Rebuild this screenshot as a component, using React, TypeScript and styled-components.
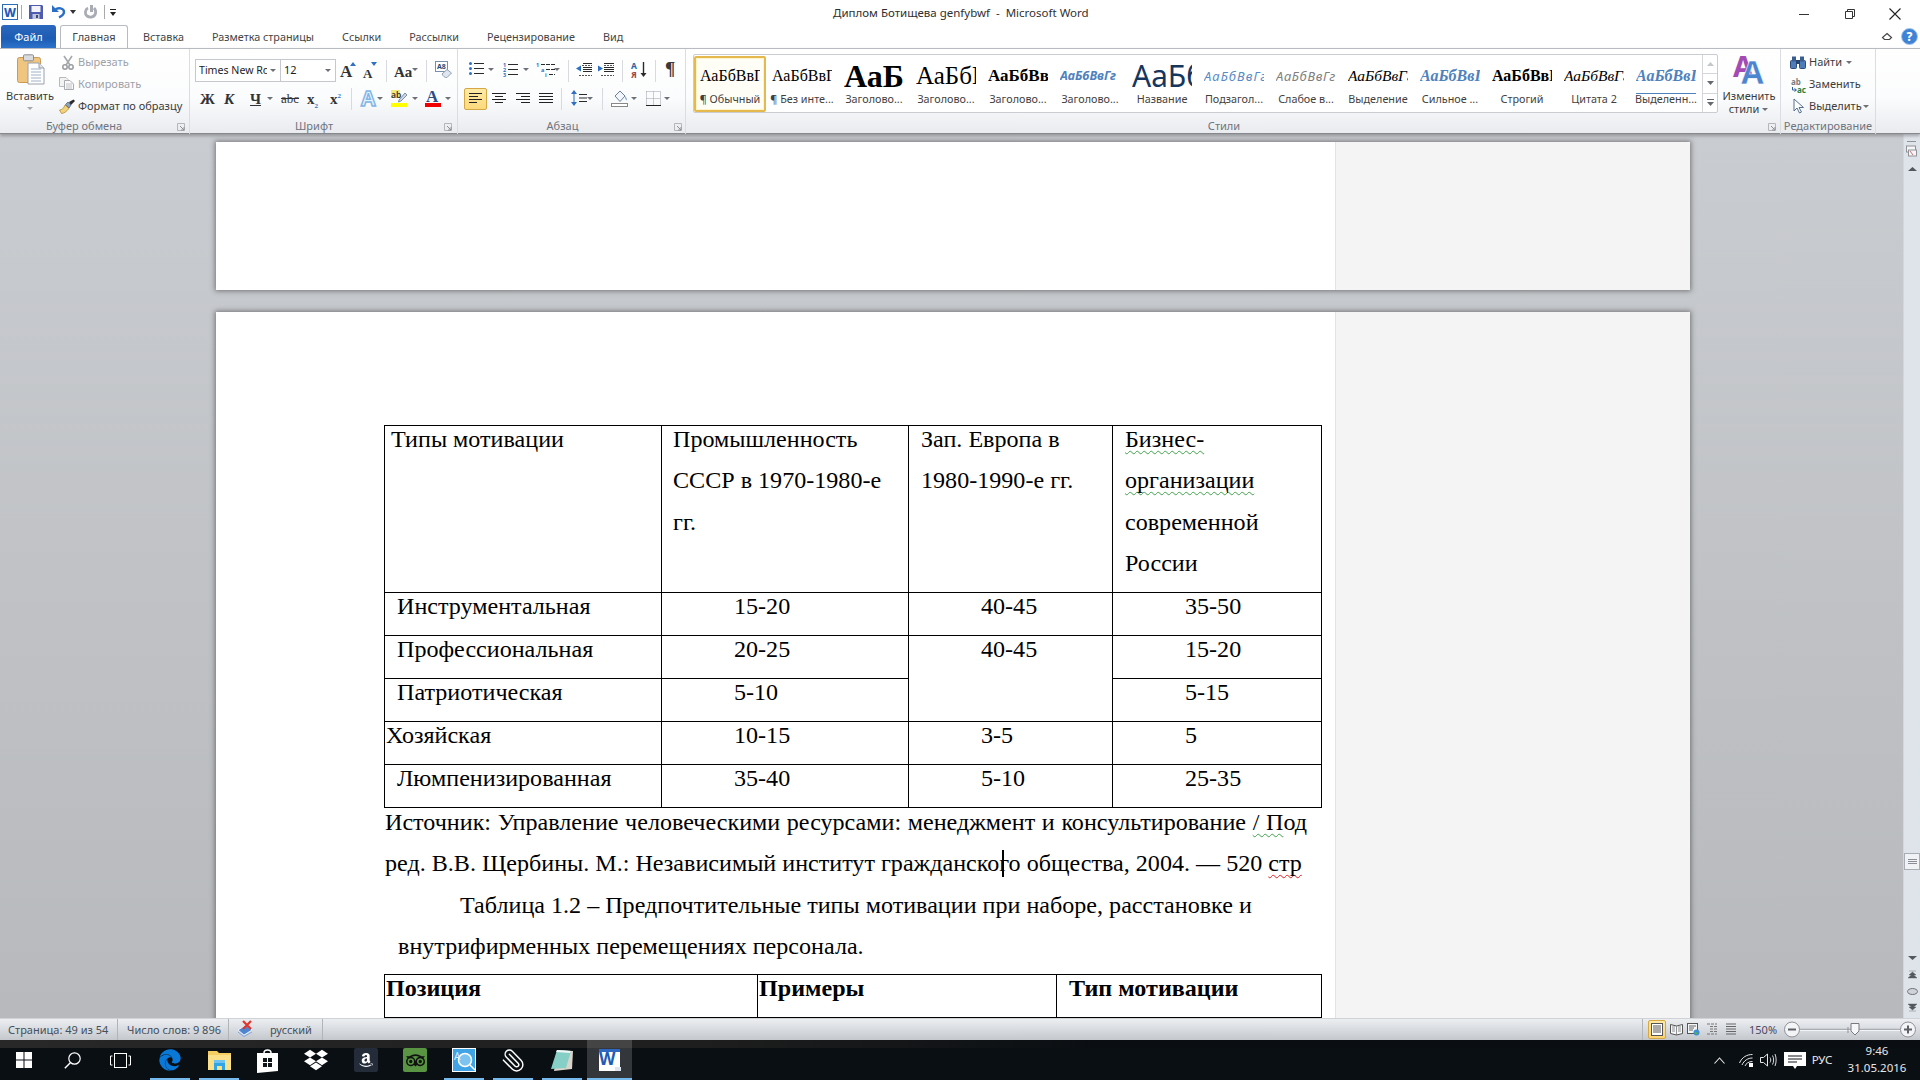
import React from 'react';
import styled, { createGlobalStyle } from 'styled-components';
import { FaEdge, FaDropbox, FaAmazon, FaTripadvisor } from 'react-icons/fa';
import { Paperclip } from 'lucide-react';

const Global = createGlobalStyle`
  html, body { margin: 0; padding: 0; width: 1920px; height: 1080px; overflow: hidden; background: #c8cbcf; }
  #root { width: 1920px; height: 1080px; }
`;

const UI = `"Noto Sans", "Open Sans", sans-serif`;
const SERIF = `"Liberation Serif", "Times New Roman", serif`;

const Frame = styled.div`
  position: relative; width: 1920px; height: 1080px; overflow: hidden;
  display: flex; flex-direction: column; font-family: ${UI}; font-size: 11px; color: #3b3b3b;
`;
const Glyph = styled.svg<{ $x: number; $y: number }>`
  position: absolute; left: ${p => p.$x}px; top: ${p => p.$y}px; overflow: visible;
`;

/* ---------- title bar ---------- */
const TitleArea = styled.header`
  flex: 0 0 48px; height: 48px; background: #fff; box-sizing: border-box; padding-top: 25px;
`;
const WindowTitle = styled.div`
  position: absolute; left: 833px; top: 5px; font-size: 11.5px; line-height: 16px; color: #2f2f2f; white-space: pre;
`;
const TabRow = styled.nav`
  display: flex; align-items: stretch; height: 23px; padding-left: 1px; position: relative; z-index: 2;
`;
const FileTab = styled.div`
  width: 55px; height: 23px; box-sizing: border-box; border-radius: 3px 3px 0 0; color: #fff; text-align: center;
  line-height: 23px; background: linear-gradient(#2c68bd, #1c5cb4 60%, #2d74cc); font-size: 11px;
`;
const ActiveTab = styled.div`
  margin-left: 4px; margin-right: 15px; width: 68px; height: 24px; box-sizing: border-box; text-align: center; line-height: 22px;
  background: #fff; border: 1px solid #b8bcc2; border-bottom: 0; border-radius: 3px 3px 0 0; color: #444;
`;
const Tab = styled.div`
  margin-right: 28px; line-height: 23px; white-space: nowrap; color: #444; font-size: 10.8px;
`;

/* ---------- ribbon ---------- */
const Ribbon = styled.section`
  flex: 0 0 86px; height: 86px; box-sizing: border-box; display: flex; z-index: 3;
  background: linear-gradient(#fff 0, #fbfcfd 48px, #e9ebef 84px);
  border-top: 1px solid #b8bcc2; border-bottom: 1px solid #85888d; box-shadow: 0 2px 3px rgba(90, 90, 95, .45);
`;
const Group = styled.div<{ $w: number }>`
  flex: 0 0 ${p => p.$w}px; box-sizing: border-box; border-right: 1px solid #dadde2;
  display: flex; align-items: flex-end; justify-content: center; height: 85px;
  &:last-child { border-right: 0; }
`;
const GroupLabel = styled.span<{ $pad?: number }>`
  line-height: 15px; margin-bottom: 1px; color: #6e7480; padding-right: ${p => p.$pad ?? 0}px; white-space: nowrap;
`;
const Label = styled.span<{ $x: number; $y: number; $muted?: boolean; $center?: boolean }>`
  position: absolute; left: ${p => p.$x}px; top: ${p => p.$y - 8}px; line-height: 16px; white-space: nowrap;
  color: ${p => (p.$muted ? '#9ea2a9' : '#3c3c3c')};
  ${p => (p.$center ? 'transform: translateX(-50%);' : '')}
`;
const Caret = styled.i<{ $x: number; $y: number; $light?: boolean }>`
  position: absolute; left: ${p => p.$x - 3}px; top: ${p => p.$y - 1}px; width: 0; height: 0;
  border-left: 3px solid transparent; border-right: 3px solid transparent; border-top: 3px solid ${p => (p.$light ? '#a5a8ad' : '#6d7076')};
`;
const ToolRule = styled.i<{ $x: number; $y: number }>`
  position: absolute; left: ${p => p.$x}px; top: ${p => p.$y}px; width: 1px; height: 22px; background: #d8dadf;
`;
const ComboBox = styled.div<{ $x: number; $w: number }>`
  position: absolute; left: ${p => p.$x}px; top: 59px; width: ${p => p.$w}px; height: 23px; box-sizing: border-box;
  border: 1px solid #c5c8ce; background: #fff; font-size: 11px; line-height: 20px; padding-left: 3px; color: #1e1e1e; overflow: hidden; white-space: nowrap;
`;
const ComboText = styled.span`
  display: block; width: 68px; overflow: hidden; font-family: ${UI}; font-size: 10.6px;
`;
const FormatLetter = styled.span<{ $x: number; $top?: number; $tint?: string; $light?: boolean; $italic?: boolean; $under?: boolean; $strike?: boolean; $size?: number }>`
  position: absolute; left: ${p => p.$x}px; top: ${p => p.$top ?? 90}px; line-height: 18px; font-family: ${SERIF};
  font-weight: ${p => (p.$light ? 400 : 700)};
  font-size: ${p => p.$size ?? 15}px; color: ${p => p.$tint ?? '#333'}; font-style: ${p => (p.$italic ? 'italic' : 'normal')};
  text-decoration: ${p => (p.$under ? 'underline' : p.$strike ? 'line-through' : 'none')};
  sub, sup { color: #2f6fc4; font-size: 7px; line-height: 0; }
`;
const HotButton = styled.div`
  position: absolute; left: 464px; top: 88px; width: 23px; height: 22px; box-sizing: border-box; border: 1px solid #d5a745;
  border-radius: 2px; background: linear-gradient(#fdeaa6, #fcd97c);
`;

/* style gallery */
const Gallery = styled.div`
  position: absolute; left: 693px; top: 54px; width: 1025px; height: 59px; box-sizing: border-box;
  border: 1px solid #c9ccd1; border-radius: 2px; background: #fff; display: flex; padding-top: 1px;
`;
const StyleCard = styled.div<{ $on?: boolean }>`
  flex: 0 0 72px; height: 56px; box-sizing: border-box; display: flex; flex-direction: column; align-items: center;
  ${p => (p.$on ? 'border: 2px solid #e6b94e; border-radius: 2px; background: #fffef6; box-shadow: inset 0 0 0 1px #fff3c8;' : 'border: 2px solid transparent;')}
`;
const StyleSample = styled.div<{ $font?: string; $size: number; $bold?: boolean; $italic?: boolean; $color?: string; $line?: boolean; $track?: number }>`
  width: 60px; height: 36px; overflow: hidden; white-space: nowrap; text-align: left; line-height: 36px;
  font-family: ${p => p.$font ?? SERIF}; font-size: ${p => p.$size}px; font-weight: ${p => (p.$bold ? 700 : 400)};
  font-style: ${p => (p.$italic ? 'italic' : 'normal')}; color: ${p => p.$color ?? '#000'}; letter-spacing: ${p => p.$track ?? 0}px;
  ${p => (p.$line ? 'box-shadow: inset 0 -7px 0 -6px #4f81bd;' : '')}
`;
const StyleName = styled.div`
  line-height: 14px; margin-top: -2px; white-space: nowrap; color: #3f3f3f; font-size: 10.8px;
`;
const GalleryArrows = styled.div`
  margin-left: auto; margin-top: -1px; width: 15px; height: 57px; display: flex; flex-direction: column; border-left: 1px solid #d3d6da;
`;
const ArrowCell = styled.div`
  flex: 1; display: flex; align-items: center; justify-content: center; border-bottom: 1px solid #d3d6da;
  &:last-child { border-bottom: 0; }
`;

/* ---------- document ---------- */
const DocArea = styled.main`
  flex: 0 0 884px; height: 884px; position: relative; overflow: hidden; background: linear-gradient(#c9ccd0, #b7b9bc); z-index: 1;
`;
const Sheet = styled.article<{ $h: number; $gap: number }>`
  position: relative; box-sizing: border-box; width: 1474px; height: ${p => p.$h}px; margin: ${p => p.$gap}px 0 0 216px;
  background: #fff; box-shadow: 0 0 5px 1px rgba(70, 70, 72, .65); font-family: ${SERIF}; color: #000; font-size: 24.1px;
`;
const MarkupMargin = styled.div`
  position: absolute; left: 1119px; top: 0; right: 0; bottom: 0; background: #f4f4f4; border-left: 1px solid #e3e3e3;
`;
const SheetBody = styled.div`
  position: absolute; left: 168px; top: 113px; width: 937px;
`;
const Table = styled.table<{ $gap?: number }>`
  border-collapse: collapse; table-layout: fixed; width: 937px; position: relative; margin-top: ${p => p.$gap ?? 0}px;
`;
const Cell = styled.td<{ $h?: number }>`
  border: 1.2px solid #000; padding: 0; vertical-align: top; height: ${p => p.$h ?? 43}px; box-sizing: border-box; overflow: hidden;
`;
const CellText = styled.div<{ $in: number; $bold?: boolean }>`
  padding-left: ${p => p.$in}px; line-height: 26px; white-space: nowrap; font-weight: ${p => (p.$bold ? 700 : 400)};
`;
const HeadText = styled.div<{ $in: number }>`
  padding-left: ${p => p.$in}px; line-height: 41.4px; margin-top: -7px; white-space: nowrap;
`;
const Squiggle = styled.span<{ $c: string }>`
  text-decoration: underline wavy ${p => p.$c} 1px; text-underline-offset: 3px; text-decoration-skip-ink: none;
`;
const JustLine = styled.p<{ $w: number; $top?: number }>`
  margin: ${p => p.$top ?? 0}px 0 0 1px; width: ${p => p.$w}px; line-height: 41.4px; text-align: justify; text-align-last: justify; white-space: nowrap;
`;
const PlainLine = styled.p<{ $in: number }>`
  margin: 0 0 0 ${p => p.$in}px; line-height: 41.4px; white-space: nowrap;
`;
const TextCaret = styled.i`
  position: absolute; left: 786px; top: 538px; width: 1.5px; height: 27px; background: #000;
`;
const Scrollbar = styled.aside`
  position: absolute; right: 0; top: 0; width: 17px; bottom: 0; background: #dfe3ea; border-left: 1px solid #d3d6db; box-sizing: border-box; z-index: 2;
`;
const ScrollThumb = styled.div`
  position: absolute; left: 0; top: 719px; width: 16px; height: 17px; box-sizing: border-box; border: 1px solid #a9adb4; background: #f0f2f5;
  display: flex; align-items: center; justify-content: center;
`;

/* ---------- status bar ---------- */
const StatusBar = styled.footer`
  flex: 0 0 22px; height: 22px; position: relative; display: flex; z-index: 4; box-sizing: border-box;
  background: linear-gradient(#eceef1, #d8dbe0 50%, #c4c7cc); border-top: 1px solid #cfd2d6; color: #44505c; line-height: 21px; font-size: 11px;
`;
const StatusCell = styled.div<{ $w: number; $pad: number }>`
  width: ${p => p.$w}px; box-sizing: border-box; padding-left: ${p => p.$pad}px; border-right: 1px solid #b1b4b9; white-space: nowrap;
`;
const ViewActive = styled.div`
  position: absolute; left: 1648px; top: 1px; width: 18px; height: 19px; box-sizing: border-box; border: 1px solid #d5a745; border-radius: 2px;
  background: linear-gradient(#fdeaa6, #fcd372);
`;
const ZoomLabel = styled.span`
  position: absolute; left: 1749px; top: 0; color: #4a4a66;
`;
const StatusRule = styled.i`
  position: absolute; left: 1642px; top: 0; width: 1px; height: 21px; background: #b1b4b9;
`;

/* ---------- taskbar ---------- */
const Taskbar = styled.div`
  flex: 0 0 40px; height: 40px; position: relative; z-index: 4; color: #fff;
  background: linear-gradient(90deg, rgba(40, 40, 40, 1) 0, rgba(30, 30, 30, 1) 700px, rgba(10, 14, 18, 1) 1100px) top / 100% 8px no-repeat, #0a0f14;
`;
const TaskSlot = styled.div<{ $x: number; $w?: number; $on?: boolean; $run?: boolean }>`
  position: absolute; left: ${p => p.$x}px; top: 0; height: 40px; width: ${p => p.$w ?? 40}px; display: flex; align-items: center; justify-content: center;
  background: ${p => (p.$on ? 'rgba(255,255,255,.17)' : 'transparent')};
  ${p => (p.$run ? 'box-shadow: inset 0 -2px 0 #76b9ed;' : '')}
`;
const AppTile = styled.div<{ $bg: string }>`
  width: 24px; height: 24px; border-radius: 2px; background: ${p => p.$bg}; display: flex; align-items: center; justify-content: center;
`;
const MirroredClip = styled(Paperclip)`
  transform: scaleX(-1);
`;
const TrayText = styled.span<{ $x: number; $y: number; $size?: number }>`
  position: absolute; left: ${p => p.$x}px; top: ${p => p.$y}px; transform: translateX(-50%); line-height: 14px; color: #e8e8e8; font-size: ${p => p.$size ?? 11.5}px; white-space: nowrap;
`;

/* ---------- icons ---------- */
const Launcher = ({ x }: { x: number }) => (
  <Glyph $x={x} $y={123} width="8" height="8" viewBox="0 0 8 8">
    <path d="M0.5 0.5H7.5V7.5H0.5Z" fill="none" stroke="#b3b6bb" />
    <path d="M3 3L7 7M7 4V7H4" fill="none" stroke="#8d9096" />
  </Glyph>
);

const lines = (x1: number, x2: number, ys: number[], c = '#2a2a2a') =>
  ys.map(y => <path key={y} d={`M${x1} ${y}H${x2}`} stroke={c} strokeWidth="1" />);

const RibbonIcons = () => (
  <>
    {/* paste */}
    <Glyph $x={17} $y={54} width="27" height="31" viewBox="0 0 27 31">
      <rect x="0.5" y="3.5" width="23" height="25" rx="2" fill="#f0c57f" stroke="#c89a55" />
      <rect x="6.5" y="0.8" width="10" height="6" rx="1" fill="#d9dbe0" stroke="#8e8f90" />
      <path d="M11 9H22L27 14V30H11Z" fill="#fff" stroke="#9aa0a8" />
      <path d="M22 9V14H27" fill="#dfe4ec" stroke="#9aa0a8" />
      {lines(14, 24, [15, 18, 21, 24, 27], '#9fb0c6')}
    </Glyph>
    {/* cut */}
    <Glyph $x={62} $y={56} width="12" height="14" viewBox="0 0 12 14">
      <path d="M2 0L8 9M10 0L4 9" stroke="#a6a8ac" strokeWidth="1.6" fill="none" />
      <circle cx="3" cy="11" r="2.2" fill="none" stroke="#9a9ca1" strokeWidth="1.5" />
      <circle cx="9" cy="11" r="2.2" fill="none" stroke="#9a9ca1" strokeWidth="1.5" />
    </Glyph>
    {/* copy */}
    <Glyph $x={59} $y={77} width="15" height="13" viewBox="0 0 15 13">
      <path d="M0.5 0.5H7L9 2.5V9.5H0.5Z" fill="#f2f2f3" stroke="#b7b9bd" />
      <path d="M5.5 3.5H11L14.5 7V12.5H5.5Z" fill="#fafafa" stroke="#a9abb0" />
      {lines(7, 13, [7, 9, 11], '#bfc1c5')}
    </Glyph>
    {/* format painter */}
    <Glyph $x={59} $y={99} width="17" height="15" viewBox="0 0 17 15">
      <path d="M0.5 11C3 11 5 9 6 6L10 9.5C8 12 5 14.5 2.5 14.5Z" fill="#f2d37c" stroke="#b48a35" strokeWidth=".8" />
      <path d="M6.5 5.5L9 3L12 6L10 9Z" fill="#8ea3bb" stroke="#51647d" strokeWidth=".8" />
      <path d="M10 3L14.5 0.5L16 2L12 6Z" fill="#2a2a2a" />
    </Glyph>
    <Caret $x={30} $y={108} $light />

    {/* font size tools */}
    <Caret $x={273} $y={70} />
    <Caret $x={328} $y={70} />
    <FormatLetter $x={340} $size={17} $top={63}>A</FormatLetter>
    <Glyph $x={350} $y={62} width="6" height="4" viewBox="0 0 6 4"><path d="M0 4L3 0L6 4Z" fill="#2f6fc4" /></Glyph>
    <FormatLetter $x={363} $size={13} $top={65}>A</FormatLetter>
    <Glyph $x={371} $y={62} width="6" height="4" viewBox="0 0 6 4"><path d="M0 0H6L3 4Z" fill="#2f6fc4" /></Glyph>
    <ToolRule $x={386} $y={60} />
    <FormatLetter $x={394} $size={15} $top={63}>Aa</FormatLetter>
    <Caret $x={415} $y={69} />
    <ToolRule $x={426} $y={60} />
    <Glyph $x={435} $y={61} width="17" height="17" viewBox="0 0 17 17">
      <rect x="0.5" y="0.5" width="12" height="10" fill="#fff" stroke="#7b8ea8" />
      <text x="2" y="8" fontSize="7" fontWeight="700" fontFamily={UI} fill="#2b4a74">A8</text>
      <path d="M7 13L12 8.5L16.5 12L12 16.5C10 17 8 15 7 13Z" fill="#dfe6ef" stroke="#8ea0b8" />
    </Glyph>

    {/* formatting row */}
    <FormatLetter $x={200}>Ж</FormatLetter>
    <FormatLetter $x={224} $italic>К</FormatLetter>
    <FormatLetter $x={250} $under>Ч</FormatLetter>
    <Caret $x={270} $y={98} />
    <FormatLetter $x={281} $strike $light $size={13}>abc</FormatLetter>
    <FormatLetter $x={307}>x<sub>2</sub></FormatLetter>
    <FormatLetter $x={330}>x<sup>2</sup></FormatLetter>
    <ToolRule $x={351} $y={88} />
    <Glyph $x={360} $y={89} width="18" height="19" viewBox="0 0 18 19">
      <text x="1" y="17" fontSize="21" fontWeight="700" fontFamily={UI} fill="#e6f2fc" stroke="#7fb4e6" strokeWidth="1.4">A</text>
    </Glyph>
    <Caret $x={380} $y={98} />
    <Glyph $x={391} $y={90} width="17" height="17" viewBox="0 0 17 17">
      <rect x="0" y="0" width="9" height="8" fill="#f2ea78" />
      <text x="0" y="7.5" fontSize="8.5" fontFamily={UI} fontWeight="600" fill="#333">ab</text>
      <path d="M8 10L14 3L16 5L10 11L7.5 12Z" fill="#cfd8e6" stroke="#62758f" strokeWidth=".8" />
      <rect x="0" y="13" width="16" height="4" fill="#ffff00" />
    </Glyph>
    <Caret $x={415} $y={98} />
    <FormatLetter $x={426} $size={17} $top={88} $tint="#2b4d86">A</FormatLetter>
    <Glyph $x={425} $y={103} width="16" height="4" viewBox="0 0 16 4"><rect width="16" height="4" fill="#f00000" /></Glyph>
    <Caret $x={448} $y={98} />

    {/* paragraph row 1 */}
    <Glyph $x={469} $y={62} width="15" height="13" viewBox="0 0 15 13">
      <circle cx="1.5" cy="1.5" r="1.5" fill="#2f6fc4" /><circle cx="1.5" cy="6.5" r="1.5" fill="#2f6fc4" /><circle cx="1.5" cy="11.5" r="1.5" fill="#2f6fc4" />
      {lines(5, 15, [1.5, 6.5, 11.5])}
    </Glyph>
    <Caret $x={491} $y={69} />
    <Glyph $x={503} $y={62} width="15" height="14" viewBox="0 0 15 14">
      <text x="0" y="5" fontSize="5.5" fontWeight="700" fill="#2f6fc4" fontFamily={UI}>1</text>
      <text x="0" y="10" fontSize="5.5" fontWeight="700" fill="#2f6fc4" fontFamily={UI}>2</text>
      <text x="0" y="15" fontSize="5.5" fontWeight="700" fill="#2f6fc4" fontFamily={UI}>3</text>
      {lines(5, 15, [2.5, 7.5, 12.5])}
    </Glyph>
    <Caret $x={526} $y={69} />
    <Glyph $x={536} $y={62} width="20" height="15" viewBox="0 0 20 15">
      <text x="0" y="5" fontSize="5.5" fontWeight="700" fill="#2f6fc4" fontFamily={UI}>1</text>
      <text x="5" y="10" fontSize="5.5" fontWeight="700" fill="#2f6fc4" fontFamily={UI}>a</text>
      <text x="9" y="15" fontSize="5.5" fontWeight="700" fill="#2f6fc4" fontFamily={UI}>i</text>
      <path d="M5 2.5H19M10 7.5H19M13 12.5H19" stroke="#2a2a2a" strokeDasharray="4 1" />
    </Glyph>
    <Caret $x={557} $y={69} />
    <ToolRule $x={568} $y={60} />
    <Glyph $x={576} $y={62} width="16" height="14" viewBox="0 0 16 14">
      {lines(7, 16, [1.5, 5.5, 7.5, 9.5])}
      <path d="M3 13.5H16M6 3.5H16" stroke="#555" strokeDasharray="2 1" />
      <path d="M0 6.5L5 3.5V9.5Z" fill="#2f6fc4" />
    </Glyph>
    <Glyph $x={598} $y={62} width="16" height="14" viewBox="0 0 16 14">
      {lines(6, 16, [1.5, 5.5, 7.5, 9.5])}
      <path d="M3 13.5H16M6 3.5H16" stroke="#555" strokeDasharray="2 1" />
      <path d="M5 6.5L0 3.5V9.5Z" fill="#2f6fc4" />
    </Glyph>
    <ToolRule $x={622} $y={60} />
    <Glyph $x={631} $y={61} width="16" height="17" viewBox="0 0 16 17">
      <text x="0" y="8" fontSize="8.5" fontWeight="700" fill="#2f5f9e" fontFamily={UI}>А</text>
      <text x="0" y="16.5" fontSize="8.5" fontWeight="700" fill="#a0473f" fontFamily={UI}>Я</text>
      <path d="M12.5 1V14" stroke="#2a2a2a" strokeWidth="1.4" />
      <path d="M9.5 12H15.5L12.5 16Z" fill="#2a2a2a" />
    </Glyph>
    <ToolRule $x={655} $y={60} />
    <FormatLetter $x={665} $size={19} $top={60} $tint="#3a3a3a">¶</FormatLetter>

    {/* paragraph row 2 */}
    <HotButton />
    <Glyph $x={469} $y={93} width="14" height="12" viewBox="0 0 14 12"><path d="M0 .5H13M0 3.5H9M0 6.5H13M0 9.5H8" stroke="#222" /></Glyph>
    <Glyph $x={492} $y={93} width="14" height="12" viewBox="0 0 14 12"><path d="M0 .5H14M3 3.5H11M0 6.5H14M3 9.5H11" stroke="#222" /></Glyph>
    <Glyph $x={516} $y={93} width="14" height="12" viewBox="0 0 14 12"><path d="M0 .5H14M5 3.5H14M0 6.5H14M5 9.5H14" stroke="#222" /></Glyph>
    <Glyph $x={539} $y={93} width="14" height="12" viewBox="0 0 14 12"><path d="M0 .5H14M0 3.5H14M0 6.5H14M0 9.5H14" stroke="#222" /></Glyph>
    <ToolRule $x={561} $y={88} />
    <Glyph $x={571} $y={89} width="16" height="18" viewBox="0 0 16 18">
      <path d="M3 1L6 5H0ZM3 17L0 13H6Z" fill="#2f6fc4" /><path d="M3 5V13" stroke="#2f6fc4" />
      {lines(8, 16, [5.5, 9, 12.5])}
    </Glyph>
    <Caret $x={590} $y={98} />
    <ToolRule $x={602} $y={88} />
    <Glyph $x={611} $y={90} width="18" height="17" viewBox="0 0 18 17">
      <path d="M4 6L9 1L14 6L9 11.5Z" fill="#f3f6fb" stroke="#6a7f9c" />
      <path d="M14 6C15.5 8 16.5 9 15.5 10.5C14.5 10 14 8 14 6Z" fill="#6fa2db" />
      <rect x="0.5" y="13.5" width="16" height="3" fill="#fff" stroke="#888" />
    </Glyph>
    <Caret $x={634} $y={98} />
    <Glyph $x={646} $y={91} width="15" height="15" viewBox="0 0 15 15">
      <path d="M.5 .5H14.5M.5 .5V14.5M14.5 .5V14.5M7.5 .5V14.5M.5 7.5H14.5" stroke="#9aa0a8" strokeDasharray="1 1" fill="none" />
      <path d="M0 14.5H15" stroke="#222" />
    </Glyph>
    <Caret $x={667} $y={98} />

    {/* change styles */}
    <Glyph $x={1734} $y={55} width="31" height="30" viewBox="0 0 31 30">
      <text x="-1" y="22" fontSize="29" fontWeight="700" fontFamily={UI} fill="#a34bb3">A</text>
      <text x="7" y="29" fontSize="33" fontWeight="700" fontFamily={UI} fill="#4d84cf" stroke="#fff" strokeWidth=".5">A</text>
    </Glyph>

    {/* binoculars */}
    <Glyph $x={1790} $y={56} width="16" height="13" viewBox="0 0 16 13">
      <rect x="0.5" y="4.5" width="6" height="8" rx="1" fill="#4d7cb8" stroke="#2d4c78" />
      <rect x="9.5" y="4.5" width="6" height="8" rx="1" fill="#4d7cb8" stroke="#2d4c78" />
      <rect x="2" y="0.5" width="4" height="5" fill="#3a5d90" /><rect x="10" y="0.5" width="4" height="5" fill="#3a5d90" />
      <rect x="6" y="4" width="4" height="4" fill="#26446e" />
    </Glyph>
    <Caret $x={1849} $y={62} />
    <Glyph $x={1791} $y={78} width="16" height="15" viewBox="0 0 16 15">
      <text x="0" y="7" fontSize="8" fontWeight="700" fontFamily={UI} fill="#7a7d82">ab</text>
      <text x="6" y="14.5" fontSize="8" fontWeight="700" fontFamily={UI} fill="#23803c">ac</text>
      <path d="M1.5 9V12H5M3.5 10.5L5.5 12L3.5 13.5" fill="none" stroke="#2f5f9e" />
    </Glyph>
    <Glyph $x={1793} $y={98} width="12" height="16" viewBox="0 0 12 16">
      <path d="M1 1V13L4 10L6.5 15L8.5 14L6 9.5H10.5Z" fill="#fff" stroke="#55708f" />
    </Glyph>
    <Caret $x={1866} $y={106} />
  </>
);

const styleCards: { name: string; sample: string; on?: boolean; props: React.ComponentProps<typeof StyleSample> }[] = [
  { name: '¶ Обычный', sample: 'АаБбВвГг', on: true, props: { $size: 16 } },
  { name: '¶ Без инте...', sample: 'АаБбВвГг', props: { $size: 16 } },
  { name: 'Заголово...', sample: 'АаБбВ', props: { $size: 32, $bold: true } },
  { name: 'Заголово...', sample: 'АаБбВв', props: { $size: 25 } },
  { name: 'Заголово...', sample: 'АаБбВвГ', props: { $size: 17, $bold: true } },
  { name: 'Заголово...', sample: 'АаБбВвГг', props: { $font: UI, $size: 12.5, $bold: true, $italic: true, $color: '#4f81bd' } },
  { name: 'Название', sample: 'АаБбВ', props: { $font: UI, $size: 30, $color: '#17365d' } },
  { name: 'Подзагол...', sample: 'АаБбВвГг', props: { $font: UI, $size: 13, $italic: true, $color: '#5a8ac6', $track: 1 } },
  { name: 'Слабое в...', sample: 'АаБбВвГг', props: { $font: UI, $size: 13, $italic: true, $color: '#808080', $track: .6 } },
  { name: 'Выделение', sample: 'АаБбВвГг', props: { $size: 15.5, $italic: true } },
  { name: 'Сильное ...', sample: 'АаБбВвГг', props: { $size: 16, $italic: true, $bold: true, $color: '#4f81bd' } },
  { name: 'Строгий', sample: 'АаБбВвГг', props: { $size: 16, $bold: true } },
  { name: 'Цитата 2', sample: 'АаБбВвГг', props: { $size: 15.5, $italic: true } },
  { name: 'Выделенн...', sample: 'АаБбВвГг', props: { $size: 16, $italic: true, $bold: true, $color: '#4f81bd', $line: true } },
];

const RibbonBlock = () => (
  <Ribbon>
    <Group $w={190}><GroupLabel $pad={21}>Буфер обмена</GroupLabel></Group>
    <Group $w={268}><GroupLabel $pad={19}>Шрифт</GroupLabel></Group>
    <Group $w={228}><GroupLabel $pad={18}>Абзац</GroupLabel></Group>
    <Group $w={1095}><GroupLabel $pad={18}>Стили</GroupLabel></Group>
    <Group $w={95}><GroupLabel>Редактирование</GroupLabel></Group>
    <Label $x={30} $y={96} $center>Вставить</Label>
    <Label $x={78} $y={62} $muted>Вырезать</Label>
    <Label $x={78} $y={84} $muted>Копировать</Label>
    <Label $x={78} $y={106}>Формат по образцу</Label>
    <ComboBox $x={195} $w={86}><ComboText>Times New Roman</ComboText></ComboBox>
    <ComboBox $x={280} $w={56}>12</ComboBox>
    <Gallery>
      {styleCards.map((c, i) => (
        <StyleCard key={i} $on={c.on}>
          <StyleSample {...c.props}>{c.sample}</StyleSample>
          <StyleName>{c.name}</StyleName>
        </StyleCard>
      ))}
      <GalleryArrows>
        <ArrowCell><svg width="7" height="4" viewBox="0 0 7 4"><path d="M0 4L3.5 0L7 4Z" fill="#c4c7cc" /></svg></ArrowCell>
        <ArrowCell><svg width="7" height="4" viewBox="0 0 7 4"><path d="M0 0H7L3.5 4Z" fill="#666a70" /></svg></ArrowCell>
        <ArrowCell><svg width="7" height="7" viewBox="0 0 7 7"><path d="M0 .5H7" stroke="#666a70" /><path d="M0 3H7L3.5 7Z" fill="#666a70" /></svg></ArrowCell>
      </GalleryArrows>
    </Gallery>
    <Label $x={1749} $y={96} $center>Изменить</Label>
    <Label $x={1744} $y={109} $center>стили</Label>
    <Caret $x={1765} $y={109} />
    <Label $x={1809} $y={62}>Найти</Label>
    <Label $x={1809} $y={84}>Заменить</Label>
    <Label $x={1809} $y={106}>Выделить</Label>
    <RibbonIcons />
    <Launcher x={177} />
    <Launcher x={444} />
    <Launcher x={674} />
    <Launcher x={1768} />
  </Ribbon>
);

const rows = [
  { name: 'Инструментальная', ind: 12, a: '15-20', b: '40-45', c: '35-50' },
  { name: 'Профессиональная', ind: 12, a: '20-25', b: '40-45', c: '15-20', span: true },
  { name: 'Патриотическая', ind: 12, a: '5-10', c: '5-15', skip: true },
  { name: 'Хозяйская', ind: 1, a: '10-15', b: '3-5', c: '5' },
  { name: 'Люмпенизированная', ind: 12, a: '35-40', b: '5-10', c: '25-35' },
];

const Document = () => (
  <DocArea>
    <Sheet $h={148} $gap={8}><MarkupMargin /></Sheet>
    <Sheet $h={740} $gap={22}>
      <MarkupMargin />
      <SheetBody>
        <Table>
          <colgroup><col width="277" /><col width="247" /><col width="204" /><col width="209" /></colgroup>
          <tbody>
            <tr>
              <Cell $h={167}><HeadText $in={6}>Типы мотивации</HeadText></Cell>
              <Cell $h={167}><HeadText $in={11}>Промышленность<br />СССР в 1970-1980-е<br />гг.</HeadText></Cell>
              <Cell $h={167}><HeadText $in={12}>Зап. Европа в<br />1980-1990-е гг.</HeadText></Cell>
              <Cell $h={167}>
                <HeadText $in={12}>
                  <Squiggle $c="#3fa34a">Бизнес-</Squiggle><br />
                  <Squiggle $c="#3fa34a">организации</Squiggle><br />
                  современной<br />России
                </HeadText>
              </Cell>
            </tr>
            {rows.map(r => (
              <tr key={r.name}>
                <Cell><CellText $in={r.ind}>{r.name}</CellText></Cell>
                <Cell><CellText $in={72}>{r.a}</CellText></Cell>
                {!r.skip && <Cell rowSpan={r.span ? 2 : 1}><CellText $in={72}>{r.b}</CellText></Cell>}
                <Cell><CellText $in={72}>{r.c}</CellText></Cell>
              </tr>
            ))}
          </tbody>
        </Table>
        <JustLine $w={922} $top={-6}>Источник: Управление человеческими ресурсами: менеджмент и консультирование <Squiggle $c="#3fa34a">/ П</Squiggle>од</JustLine>
        <JustLine $w={916}>ред. В.В. Щербины. М.: Независимый институт гражданского общества, 2004. — 520 <Squiggle $c="#e02020">стр</Squiggle></JustLine>
        <PlainLine $in={76}>Таблица 1.2 – Предпочтительные типы мотивации при наборе, расстановке и</PlainLine>
        <PlainLine $in={14}>внутрифирменных перемещениях персонала.</PlainLine>
        <Table $gap={6}>
          <colgroup><col width="373" /><col width="299" /><col width="265" /></colgroup>
          <tbody>
            <tr>
              <Cell><CellText $in={1} $bold>Позиция</CellText></Cell>
              <Cell><CellText $in={1} $bold>Примеры</CellText></Cell>
              <Cell><CellText $in={12} $bold>Тип мотивации</CellText></Cell>
            </tr>
          </tbody>
        </Table>
      </SheetBody>
      <TextCaret />
    </Sheet>
    <Scrollbar>
      <Glyph $x={2} $y={7} width="11" height="17" viewBox="0 0 11 17">
        <path d="M1 .5H10" stroke="#8f9297" />
        <rect x=".5" y="5" width="9" height="6" fill="#f6f6f6" stroke="#8f9297" />
        <rect x="2.5" y="9" width="8" height="6" fill="#f6f6f6" stroke="#8f9297" />
        <path d="M4 10L7 14" stroke="#c04a4a" strokeWidth=".8" />
      </Glyph>
      <Glyph $x={4} $y={33} width="9" height="4" viewBox="0 0 9 4"><path d="M0 4L4.5 0L9 4Z" fill="#54575c" /></Glyph>
      <ScrollThumb><svg width="9" height="6" viewBox="0 0 9 6"><path d="M0 .5H9M0 2.5H9M0 4.5H9" stroke="#8b8e94" /></svg></ScrollThumb>
      <Glyph $x={4} $y={822} width="9" height="4" viewBox="0 0 9 4"><path d="M0 0H9L4.5 4Z" fill="#54575c" /></Glyph>
      <Glyph $x={4} $y={837} width="9" height="7" viewBox="0 0 9 7"><path d="M1 0H8M4.5 1L8 4H1ZM4.5 3L9 7H0Z" fill="#54575c" stroke="#54575c" strokeWidth=".4" /></Glyph>
      <Glyph $x={3} $y={854} width="11" height="7" viewBox="0 0 11 7"><ellipse cx="5.5" cy="3.5" rx="5" ry="3" fill="#cfd2d8" stroke="#6e7177" /></Glyph>
      <Glyph $x={4} $y={870} width="9" height="7" viewBox="0 0 9 7"><path d="M1 7H8M4.5 6L8 3H1ZM4.5 4L9 0H0Z" fill="#54575c" stroke="#54575c" strokeWidth=".4" /></Glyph>
    </Scrollbar>
  </DocArea>
);

const Status = () => (
  <StatusBar>
    <StatusCell $w={118} $pad={8}>Страница: 49 из 54</StatusCell>
    <StatusCell $w={111} $pad={9}>Число слов: 9 896</StatusCell>
    <StatusCell $w={94} $pad={41}>русский</StatusCell>
    <Glyph $x={237} $y={2} width="17" height="16" viewBox="0 0 17 16">
      <path d="M1 9L9 4L15 9L7 14Z" fill="#4f86d2" stroke="#fff" strokeWidth=".8" />
      <path d="M1 11L7 15.5L15 11" fill="none" stroke="#7ea7de" />
      <path d="M6 0L14 8M14 0L6 8" stroke="#e0352b" strokeWidth="2.2" />
    </Glyph>
    <StatusRule />
    <ViewActive />
    <Glyph $x={1651} $y={4} width="12" height="13" viewBox="0 0 12 13"><rect x=".5" y=".5" width="11" height="12" fill="#fff" stroke="#555" /><path d="M2 3H10M2 5H10M2 7H10M2 9H10" stroke="#555" /></Glyph>
    <Glyph $x={1670} $y={4} width="13" height="13" viewBox="0 0 13 13"><path d="M.5 1.5L6.5 3L12.5 1.5V10.5L6.5 12L.5 10.5Z" fill="#f6f7f9" stroke="#555" /><path d="M6.5 3V12M2 4H5M2 6H5M2 8H5M8 4H11M8 6H11M8 8H11" stroke="#777" strokeWidth=".8" /></Glyph>
    <Glyph $x={1687} $y={4} width="13" height="13" viewBox="0 0 13 13"><rect x=".5" y=".5" width="10" height="10" fill="#f4f5f7" stroke="#555" /><path d="M2 3H9M2 5H7M2 7H6" stroke="#666" /><circle cx="9.5" cy="9.5" r="3" fill="#3f8fd0" /><path d="M8 9L10 11" stroke="#5db14f" strokeWidth="1.6" /></Glyph>
    <Glyph $x={1706} $y={4} width="12" height="12" viewBox="0 0 12 12"><path d="M1 1H11M4 3.5H11M4 6H11M4 8.5H11M1 11H11" stroke="#777" strokeDasharray="3 1" /></Glyph>
    <Glyph $x={1725} $y={4} width="12" height="12" viewBox="0 0 12 12"><path d="M1 1H11M1 3.5H11M1 6H11M1 8.5H11M1 11H11" stroke="#666" /></Glyph>
    <ZoomLabel>150%</ZoomLabel>
    <Glyph $x={1784} $y={2} width="124" height="17" viewBox="0 0 124 17">
      <path d="M14 8.5H118" stroke="#a8acb2" strokeWidth="1.4" /><path d="M14 9.5H118" stroke="#f4f5f6" />
      <path d="M64 6V12" stroke="#8e9197" />
      <circle cx="8" cy="8.5" r="7.5" fill="#f3f4f6" stroke="#8d9096" />
      <path d="M4 8.5H12" stroke="#5d6066" strokeWidth="2" />
      <circle cx="124" cy="8.5" r="7.5" fill="#f3f4f6" stroke="#8d9096" />
      <path d="M120 8.5H128M124 4.5V12.5" stroke="#5d6066" strokeWidth="2" />
      <path d="M67 2.5H75V10L71 14L67 10Z" fill="#f6f7f8" stroke="#777b81" />
    </Glyph>
  </StatusBar>
);

const Tasks = () => (
  <Taskbar>
    <TaskSlot $x={4}>
      <svg width="16" height="16" viewBox="0 0 16 16"><path d="M0 0H7.5V7.5H0ZM8.5 0H16V7.5H8.5ZM0 8.5H7.5V16H0ZM8.5 8.5H16V16H8.5Z" fill="#fff" /></svg>
    </TaskSlot>
    <TaskSlot $x={52}>
      <svg width="17" height="17" viewBox="0 0 17 17"><circle cx="10.5" cy="6.5" r="5.7" fill="none" stroke="#fff" strokeWidth="1.2" /><path d="M6.3 10.7L.8 16.2" stroke="#fff" strokeWidth="1.4" /></svg>
    </TaskSlot>
    <TaskSlot $x={100}>
      <svg width="21" height="15" viewBox="0 0 21 15"><rect x="4.5" y=".5" width="12" height="14" fill="none" stroke="#fff" /><path d="M2.5 3H.5V12H2.5M18.5 3H20.5V12H18.5" fill="none" stroke="#fff" /></svg>
    </TaskSlot>
    <TaskSlot $x={150} $run><FaEdge size={22} color="#0a78d6" /></TaskSlot>
    <TaskSlot $x={199} $run>
      <svg width="23" height="23" viewBox="0 0 23 23"><path d="M0 2H9L11 4H23V21H0Z" fill="#f5ce62" /><rect x="0" y="6" width="23" height="15" fill="#fbe08a" /><path d="M6 21V14H17V21H14V17H9V21Z" fill="#2fa4e7" /><rect x="6" y="11" width="11" height="3" fill="#6ec3f0" /></svg>
    </TaskSlot>
    <TaskSlot $x={247}>
      <svg width="21" height="25" viewBox="0 0 21 25"><path d="M7 5C7 1 14 1 14 5" fill="none" stroke="#fff" strokeWidth="1.5" /><path d="M0 5H21V23L0 25Z" fill="#fff" /><path d="M6 10H10V14H6ZM11 10H15V14H11ZM6 15H10V19H6ZM11 15H15V19H11Z" fill="#10151a" /></svg>
    </TaskSlot>
    <TaskSlot $x={296}><FaDropbox size={24} color="#fff" /></TaskSlot>
    <TaskSlot $x={346}><AppTile $bg="#232c38"><FaAmazon size={16} color="#fff" /></AppTile></TaskSlot>
    <TaskSlot $x={395}><AppTile $bg="#589442"><FaTripadvisor size={19} color="#111" /></AppTile></TaskSlot>
    <TaskSlot $x={444} $run>
      <svg width="24" height="24" viewBox="0 0 24 24"><rect width="24" height="24" fill="#fff" /><rect x="1" y="1" width="22" height="22" fill="#3fa3e6" /><circle cx="13" cy="12" r="6.5" fill="#7cc3f0" stroke="#fff" strokeWidth="1.5" /><path d="M18 17L23 22" stroke="#fff" strokeWidth="1.5" /><text x="2" y="12" fontSize="10" fill="#d7eefc" fontFamily={UI}>A</text></svg>
    </TaskSlot>
    <TaskSlot $x={493} $run><MirroredClip size={25} color="#fff" strokeWidth={1.4} /></TaskSlot>
    <TaskSlot $x={542} $run>
      <svg width="23" height="23" viewBox="0 0 23 23"><path d="M7 1L22 2L21 20L3 22Z" fill="#d9d4ca" /><path d="M6 1L20 2L15 19L0 20Z" fill="#86cfc7" /><path d="M6 1L20 2L19 4L5 3Z" fill="#eef5f3" /></svg>
    </TaskSlot>
    <TaskSlot $x={587} $w={45} $on $run>
      <svg width="24" height="24" viewBox="0 0 24 24"><rect x="1" y="1" width="21" height="22" fill="#fff" /><rect x="1" y="1" width="21" height="3" fill="#2e68c0" /><text x="1" y="17" fontSize="17" fontWeight="700" fontFamily={UI} fill="#1f5bb5">W</text><path d="M17 19H23V23H17Z" fill="#dfe5ee" /></svg>
    </TaskSlot>
    <Glyph $x={1714} $y={17} width="11" height="7" viewBox="0 0 11 7"><path d="M.5 6.5L5.5 1L10.5 6.5" fill="none" stroke="#e8e8e8" strokeWidth="1.1" /></Glyph>
    <Glyph $x={1739} $y={13} width="14" height="14" viewBox="0 0 14 14">
      <path d="M.5 10C3 4 8 1.5 13.5 1.5M3 12C5 7.5 9 5 13.5 5M6 13C7 10.5 9.5 8.5 13.5 8.5" fill="none" stroke="#e8e8e8" />
      <rect x="10" y="10" width="4" height="4" fill="#fff" />
    </Glyph>
    <Glyph $x={1760} $y={13} width="16" height="14" viewBox="0 0 16 14">
      <path d="M.5 4.5H3.5L7.5 1V13L3.5 9.5H.5Z" fill="none" stroke="#e8e8e8" />
      <path d="M10 4.5C11 6 11 8 10 9.5M12.5 2.5C14 5 14 9 12.5 11.5M15 1C16.5 5 16.5 9 15 13" fill="none" stroke="#d8d8d8" />
    </Glyph>
    <Glyph $x={1784} $y={12} width="22" height="18" viewBox="0 0 22 18">
      <path d="M0 0H22V14H13L11 17L9 14H0Z" fill="#fff" />
      <path d="M4 4H18M4 7H18M4 10H13" stroke="#10151a" />
    </Glyph>
    <TrayText $x={1822} $y={13}>РУС</TrayText>
    <TrayText $x={1877} $y={4}>9:46</TrayText>
    <TrayText $x={1877} $y={21}>31.05.2016</TrayText>
  </Taskbar>
);

const TitleIcons = () => (
  <>
    <Glyph $x={2} $y={4} width="16" height="16" viewBox="0 0 16 16">
      <rect x=".5" y=".5" width="15" height="15" fill="#fff" stroke="#2b6cb8" />
      <text x="2" y="12.5" fontSize="12" fontWeight="800" fontFamily={UI} fill="#1f5bb5">W</text>
    </Glyph>
    <Glyph $x={21} $y={5} width="1" height="14" viewBox="0 0 1 14"><path d="M.5 0V14" stroke="#aaa" /></Glyph>
    <Glyph $x={29} $y={5} width="14" height="14" viewBox="0 0 14 14">
      <path d="M0 0H13L14 1V14H0Z" fill="#4d5cae" />
      <rect x="2.5" y="1" width="9" height="6" fill="#f2f4fa" />
      <rect x="3.5" y="9" width="7" height="5" fill="#bfc5d9" /><rect x="7" y="10" width="2" height="3" fill="#3b477f" />
    </Glyph>
    <Glyph $x={52} $y={5} width="13" height="13" viewBox="0 0 13 13">
      <path d="M0 0V7H7Z" fill="#2a6fc4" />
      <path d="M3 5C6 2 12 3 12 7C12 10 9 11.5 7 12.5" fill="none" stroke="#2a6fc4" strokeWidth="2.4" />
    </Glyph>
    <Glyph $x={70} $y={10} width="6" height="4" viewBox="0 0 6 4"><path d="M0 0H6L3 4Z" fill="#333" /></Glyph>
    <Glyph $x={84} $y={5} width="13" height="13" viewBox="0 0 13 13">
      <path d="M6 0H9V7H6Z" fill="#a9adb3" />
      <path d="M4 3C1 4.5 .5 9 3 11C6 13 10.5 12 11.5 8.5C12 6.5 11 4 10 3" fill="none" stroke="#a9adb3" strokeWidth="2.8" />
    </Glyph>
    <Glyph $x={104} $y={5} width="1" height="14" viewBox="0 0 1 14"><path d="M.5 0V14" stroke="#aaa" /></Glyph>
    <Glyph $x={110} $y={9} width="6" height="7" viewBox="0 0 6 7"><path d="M0 .5H6" stroke="#222" /><path d="M0 3H6L3 7Z" fill="#222" /></Glyph>
    <Glyph $x={1799} $y={14} width="10" height="1" viewBox="0 0 10 1"><path d="M0 .5H10" stroke="#333" /></Glyph>
    <Glyph $x={1845} $y={9} width="10" height="10" viewBox="0 0 10 10"><path d="M2.5 2.5V.5H9.5V7.5H7.5M.5 2.5H7.5V9.5H.5Z" fill="none" stroke="#333" /></Glyph>
    <Glyph $x={1889} $y={8} width="12" height="12" viewBox="0 0 12 12"><path d="M.5 .5L11.5 11.5M11.5 .5L.5 11.5" stroke="#222" strokeWidth="1.1" /></Glyph>
    <Glyph $x={1882} $y={33} width="10" height="7" viewBox="0 0 10 7"><path d="M5 .5L9.5 4.5L7.5 6.5H2.5L.5 4.5Z" fill="none" stroke="#444" strokeWidth="1.2" /></Glyph>
    <Glyph $x={1901} $y={28} width="17" height="17" viewBox="0 0 17 17">
      <circle cx="8.5" cy="8.5" r="8" fill="#3f83d6" stroke="#a9c7ec" />
      <text x="8.5" y="13" fontSize="12" fontWeight="800" fontFamily={UI} fill="#fff" textAnchor="middle">?</text>
    </Glyph>
  </>
);

export default function App() {
  return (
    <Frame>
      <Global />
      <TitleArea>
        <TitleIcons />
        <WindowTitle>Диплом Ботищева genfybwf  -  Microsoft Word</WindowTitle>
        <TabRow>
          <FileTab>Файл</FileTab>
          <ActiveTab>Главная</ActiveTab>
          <Tab>Вставка</Tab>
          <Tab>Разметка страницы</Tab>
          <Tab>Ссылки</Tab>
          <Tab>Рассылки</Tab>
          <Tab>Рецензирование</Tab>
          <Tab>Вид</Tab>
        </TabRow>
      </TitleArea>
      <RibbonBlock />
      <Document />
      <Status />
      <Tasks />
    </Frame>
  );
}
